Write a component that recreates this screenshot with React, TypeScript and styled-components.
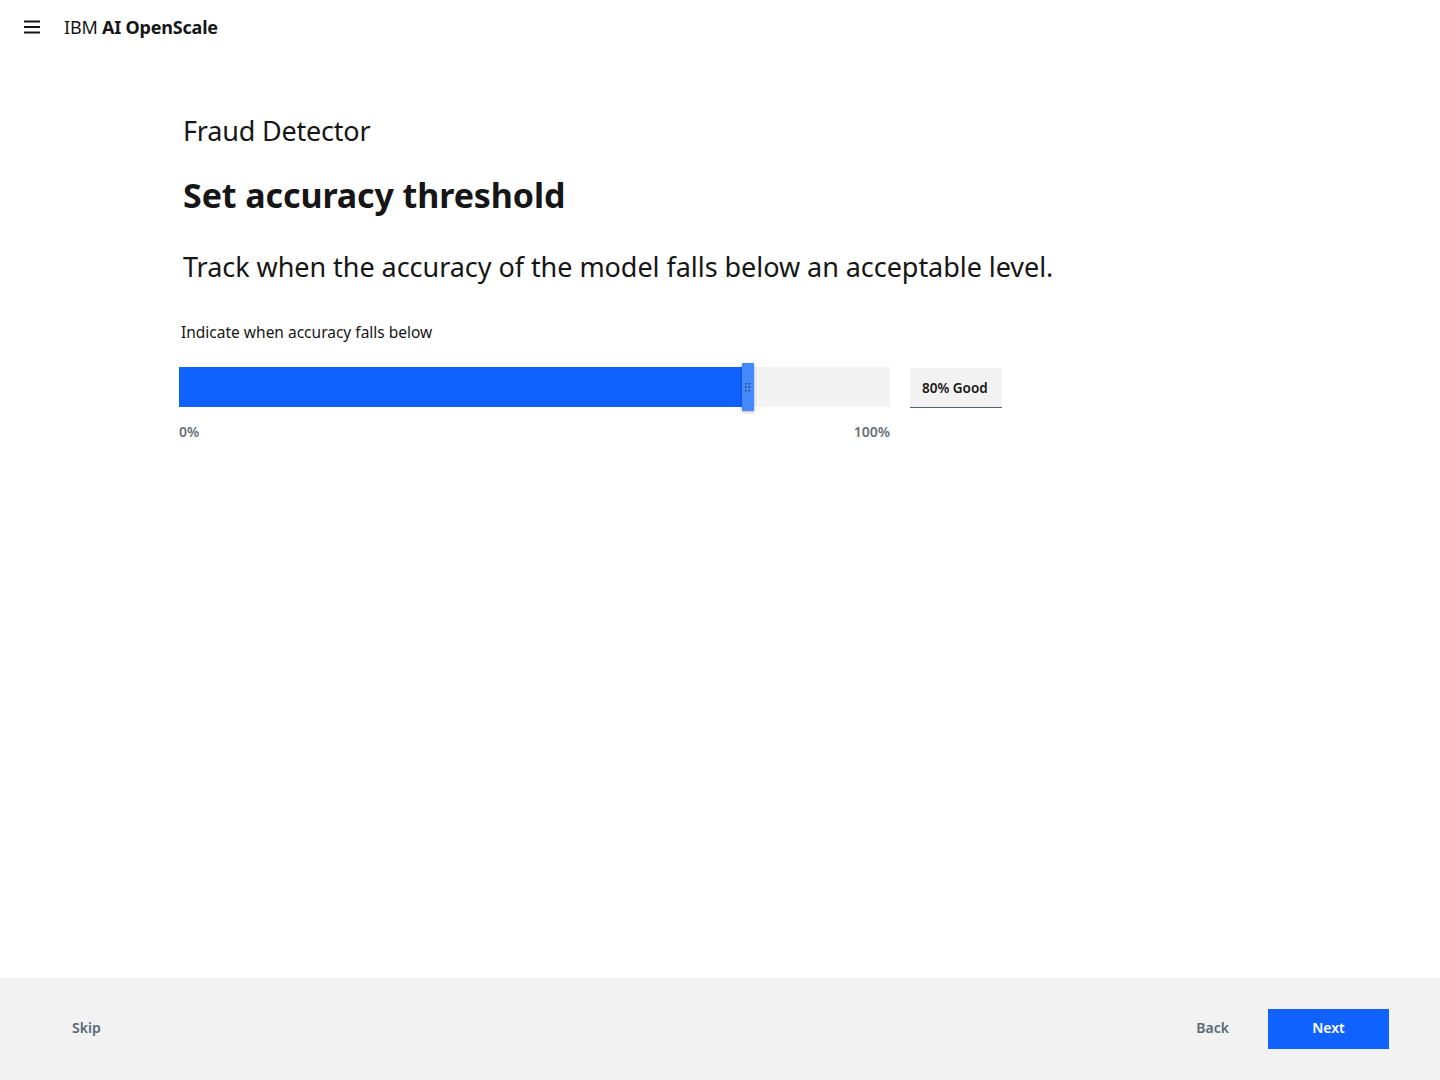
import React from "react";
import styled, { createGlobalStyle } from "styled-components";

const Global = createGlobalStyle`
  html, body { margin: 0; padding: 0; background: #ffffff; }
  body { font-family: "Noto Sans", "Liberation Sans", sans-serif; color: #161616; }
  * { box-sizing: border-box; }
`;

const Page = styled.div`
  width: 1440px;
  height: 1080px;
  display: flex;
  flex-direction: column;
  background: #ffffff;
`;

const Header = styled.header`
  height: 56px;
  display: flex;
  align-items: center;
  padding-left: 24px;
  padding-bottom: 2px;
  gap: 24px;
`;

const Brand = styled.div`
  font-size: 18px;
  letter-spacing: -0.2px;
  color: #161616;
  b { font-weight: 700; }
`;

const Main = styled.main`
  flex: 1;
  padding: 55px 0 0 183px;
  display: flex;
  flex-direction: column;
`;

const Subtitle = styled.div`
  font-size: 27px;
  letter-spacing: -0.2px;
  line-height: 40px;
  font-weight: 400;
`;

const Title = styled.h1`
  margin: 20px 0 0;
  font-size: 34px;
  letter-spacing: -0.1px;
  line-height: 48px;
  font-weight: 700;
`;

const Lead = styled.p`
  margin: 28px 0 0;
  font-size: 27px;
  letter-spacing: -0.05px;
  line-height: 40px;
  font-weight: 400;
`;

const FieldLabel = styled.label`
  margin: 34px 0 0 -2px;
  font-size: 15.5px;
  line-height: 22px;
`;

const SliderRow = styled.div`
  margin: 24px 0 0 -4px;
  display: flex;
  align-items: flex-start;
  gap: 20px;
`;

const SliderCol = styled.div`
  width: 711px;
  display: flex;
  flex-direction: column;
`;

const Track = styled.div`
  position: relative;
  height: 40px;
  background: #f2f2f2;
`;

const Fill = styled.div`
  height: 100%;
  background: #0f62fe;
`;

const Handle = styled.div`
  position: absolute;
  top: -4px;
  width: 12px;
  height: 48px;
  background: #4589ff;
  box-shadow: 0 1px 3px rgba(0, 0, 0, 0.3);
  display: grid;
  place-items: center;
`;

const Ends = styled.div`
  margin-top: 15px;
  display: flex;
  justify-content: space-between;
  font-size: 14px;
  font-weight: 600;
  color: #697077;
`;

const ValueBox = styled.div`
  margin-top: 1px;
  height: 40px;
  padding: 0 14px 0 12px;
  background: #f2f2f2;
  border-bottom: 1px solid #56606b;
  display: flex;
  align-items: center;
  font-size: 13.5px;
  font-weight: 600;
  color: #161616;
`;

const Footer = styled.footer`
  height: 102px;
  background: #f2f2f2;
  display: flex;
  align-items: center;
  padding: 0 51px 0 72px;
`;

const GhostButton = styled.button`
  border: none;
  background: transparent;
  padding: 0 0 4px;
  font-family: inherit;
  font-size: 14px;
  font-weight: 600;
  color: #5a6872;
`;

const Spacer = styled.div`
  flex: 1;
`;

const PrimaryButton = styled.button`
  margin-left: 39px;
  width: 121px;
  height: 40px;
  border: none;
  padding: 0 0 3px;
  background: #0f62fe;
  color: #ffffff;
  font-family: inherit;
  font-size: 14px;
  font-weight: 600;
`;

const TRACK = 711;
const value = 80;

export default function App() {
  const center = (value / 100) * TRACK;
  return (
    <Page>
      <Global />
      <Header>
        <svg width="16" height="14" viewBox="0 0 16 14" aria-hidden>
          <rect x="0" y="0.5" width="16" height="2" fill="#161616" />
          <rect x="0" y="6" width="16" height="2" fill="#161616" />
          <rect x="0" y="11.5" width="16" height="2" fill="#161616" />
        </svg>
        <Brand>
          IBM <b>AI OpenScale</b>
        </Brand>
      </Header>
      <Main>
        <Subtitle>Fraud Detector</Subtitle>
        <Title>Set accuracy threshold</Title>
        <Lead>Track when the accuracy of the model falls below an acceptable level.</Lead>
        <FieldLabel>Indicate when accuracy falls below</FieldLabel>
        <SliderRow>
          <SliderCol>
            <Track>
              <Fill style={{ width: `${center - 6}px` }} />
              <Handle style={{ left: `${center - 6}px` }}>
                <svg width="5" height="9" viewBox="0 0 5 9" aria-hidden>
                  {[0, 3.5, 7].map((y) =>
                    [0, 3.5].map((x) => (
                      <rect key={`${x}-${y}`} x={x} y={y} width="1.5" height="1.5" fill="#2d3f63" />
                    ))
                  )}
                </svg>
              </Handle>
            </Track>
            <Ends>
              <span>0%</span>
              <span>100%</span>
            </Ends>
          </SliderCol>
          <ValueBox>80% Good</ValueBox>
        </SliderRow>
      </Main>
      <Footer>
        <GhostButton>Skip</GhostButton>
        <Spacer />
        <GhostButton>Back</GhostButton>
        <PrimaryButton>Next</PrimaryButton>
      </Footer>
    </Page>
  );
}
